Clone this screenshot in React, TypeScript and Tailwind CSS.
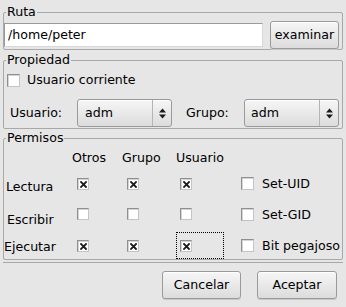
import React from "react";

function Check({ checked = false, big = false }: { checked?: boolean; big?: boolean }) {
  const size = big ? "w-[13px] h-[13px]" : "w-[12px] h-[12px]";
  return (
    <div
      className={
        size +
        " shrink-0 flex items-center justify-center border border-t-[#8f8f8f] border-l-[#8f8f8f] border-b-[#c4c4c4] border-r-[#c4c4c4] bg-white shadow-[inset_1px_1px_0_#d4d4d4]"
      }
    >
      {checked && (
        <svg width="7" height="7" viewBox="0 0 7 7">
          <path d="M1 1 L6 6 M6 1 L1 6" stroke="#1c1c1c" strokeWidth="1.8" strokeLinecap="square" />
        </svg>
      )}
    </div>
  );
}

function Button({ label, w }: { label: string; w: string }) {
  return (
    <div
      className={
        w +
        " h-[28px] shrink-0 flex items-center justify-center rounded-[3px] border border-[#9a9a9a] bg-gradient-to-b from-[#f6f6f6] to-[#dcdcdc] shadow-[inset_0_1px_0_#ffffff,0_1px_0_#c8c8c8]"
      }
    >
      {label}
    </div>
  );
}

function Select({ value, pad }: { value: string; pad: string }) {
  return (
    <div className="w-[95px] h-[28px] shrink-0 flex rounded-[3px] border border-[#9a9a9a] bg-gradient-to-b from-[#f6f6f6] to-[#dcdcdc] shadow-[inset_0_1px_0_#ffffff]">
      <span className={"flex-1 flex items-center " + pad}>{value}</span>
      <div className="w-[19px] flex items-center justify-center border-l border-[#b4b4b4]">
        <svg width="7" height="11" viewBox="0 0 7 11">
          <path d="M0 4.5 L3.5 0.5 L7 4.5 Z M0 6.5 L7 6.5 L3.5 10.5 Z" fill="#1a1a1a" />
        </svg>
      </div>
    </div>
  );
}

function Group({ title, className = "", children }: { title: string; className?: string; children: React.ReactNode }) {
  return (
    <fieldset className={"border border-[#a8a8a8] rounded-[2px] " + className}>
      <legend className="ml-[2px] px-[1px] leading-[16px]">{title}</legend>
      {children}
    </fieldset>
  );
}

export default function App() {
  return (
    <div className="w-[346px] h-[307px] overflow-hidden whitespace-nowrap bg-[#e6e6e6] text-black text-[12.6px] leading-[16px] font-['DejaVu_Sans',sans-serif] px-[3px] pt-[4px]">
      <Group title="Ruta" className="pb-[1px] pr-[2px]">
        <div className="flex h-[27px] mt-[1px]">
          <div className="w-[259px] h-[24px] mt-[2px] flex items-center pl-[3px] bg-white border border-t-[#9a9a9a] border-l-[#9a9a9a] border-b-[#d8d8d8] border-r-[#d8d8d8]">
            /home/peter
          </div>
          <div className="ml-[7px]">
            <Button label="examinar" w="w-[69px]" />
          </div>
        </div>
      </Group>

      <Group title="Propiedad" className="mt-[2px] pb-[1px]">
        <div className="flex items-center h-[18px] mt-[3px] pl-[3px]">
          <Check big />
          <span className="ml-[7px]">Usuario corriente</span>
        </div>
        <div className="flex items-center h-[28px] mt-[10px] pl-[6px]">
          <span className="w-[67px]">Usuario:</span>
          <Select value="adm" pad="pl-[7px]" />
          <span className="ml-[14px] w-[58px]">Grupo:</span>
          <Select value="adm" pad="pl-[6px]" />
        </div>
      </Group>

      <Group title="Permisos" className="mt-[1px]">
        <div className="flex h-[16px] mt-[4px]">
          <div className="w-[68px]" />
          <span className="w-[50px]">Otros</span>
          <span className="w-[54px]">Grupo</span>
          <span>Usuario</span>
        </div>

        <div className="flex h-[35px]">
          <span className="w-[68px] pl-[2px] mt-[13px]">Lectura</span>
          <div className="w-[50px] pl-[5px] pt-[12px]"><Check checked /></div>
          <div className="w-[54px] pl-[5px] pt-[12px]"><Check checked /></div>
          <div className="w-[65px] pl-[4px] pt-[12px]"><Check checked /></div>
          <div className="flex items-center h-[13px] mt-[11px]">
            <Check big />
            <span className="ml-[8px]">Set-UID</span>
          </div>
        </div>

        <div className="flex h-[31px]">
          <span className="w-[68px] pl-[3px] mt-[11px]">Escribir</span>
          <div className="w-[50px] pl-[5px] pt-[7px]"><Check /></div>
          <div className="w-[54px] pl-[5px] pt-[7px]"><Check /></div>
          <div className="w-[65px] pl-[4px] pt-[7px]"><Check /></div>
          <div className="flex items-center h-[13px] mt-[7px]">
            <Check big />
            <span className="ml-[8px]">Set-GID</span>
          </div>
        </div>

        <div className="flex h-[27px]">
          <span className="w-[68px] mt-[7px]">Ejecutar</span>
          <div className="w-[50px] pl-[5px] pt-[8px]"><Check checked /></div>
          <div className="w-[54px] pl-[5px] pt-[8px]"><Check checked /></div>
          <div className="w-[65px]">
            <div className="w-[48px] h-[27px] border border-dotted border-black pl-[3px] pt-[7px]">
              <Check checked />
            </div>
          </div>
          <div className="flex items-center h-[13px] mt-[7px]">
            <Check big />
            <span className="ml-[8px]">Bit pegajoso</span>
          </div>
        </div>
      </Group>

      <div className="mt-[2px] border-t border-[#a8a8a8] shadow-[inset_0_1px_0_#ffffff]" />

      <div className="flex justify-end gap-[16px] pr-[6px] mt-[8px]">
        <Button label="Cancelar" w="w-[79px]" />
        <Button label="Aceptar" w="w-[80px]" />
      </div>
    </div>
  );
}
